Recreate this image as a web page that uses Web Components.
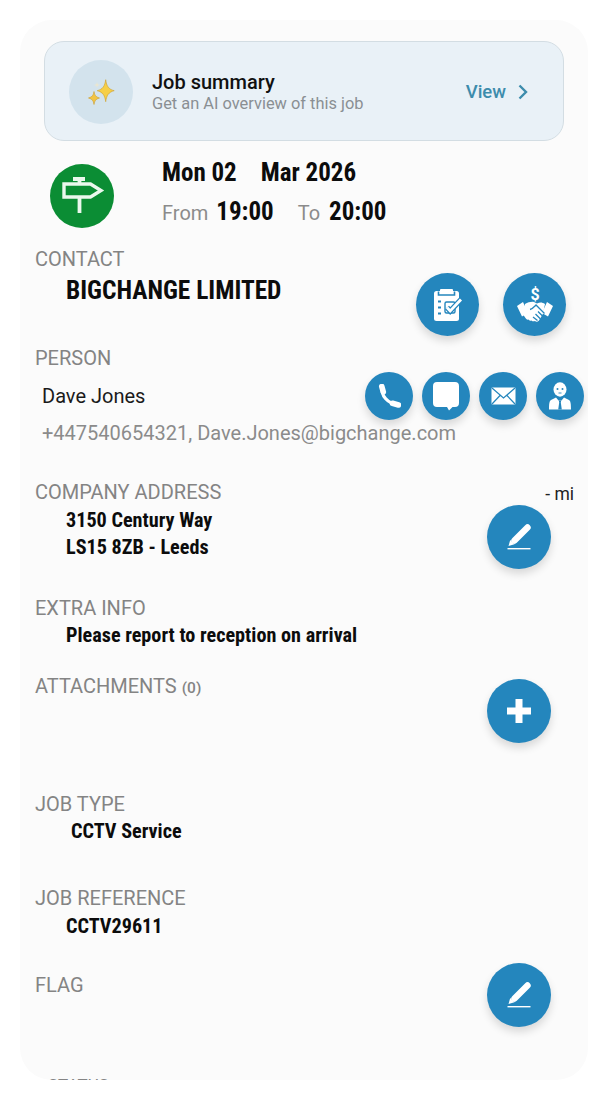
<!DOCTYPE html>
<html><head><meta charset="utf-8">
<style>
html,body{margin:0;background:#fff}
body{font-family:Roboto,"Liberation Sans",sans-serif}
</style></head>
<body>
<template id="t-card"><style>
:host{display:block;margin:20px 20px 0;height:1060px;background:#fbfbfb;border-radius:32px;overflow:hidden;position:relative;box-sizing:border-box;padding:21px 0 0 15px}
</style><slot></slot></template>

<template id="t-banner"><style>
:host{display:flex;align-items:center;box-sizing:border-box;width:520px;height:100px;margin-left:9px;padding:2px 35px 0 24px;background:#e9f1f7;border:1px solid #d3dde3;border-radius:20px}
.c{width:64px;height:64px;border-radius:50%;background:#d3e3ed;display:flex;align-items:center;justify-content:center;margin-right:19px;flex:none}
.t{flex:1;line-height:1}
.a{font-size:20px;font-weight:500;color:#111;display:block;margin-bottom:4px}
.b{font-size:16.400px;color:#8a8f93;display:block}
.v{color:#3d8cac;font-size:18.500px;font-weight:500;display:flex;align-items:center;gap:12px}
</style><span class="c"><slot name="icon"></slot></span><span class="t"><span class="a">Job summary</span><span class="b">Get an AI overview of this job</span></span><span class="v">View <svg width="10" height="16" viewBox="0 0 10 16"><path d="M1.500 1.500 8 8l-6.500 6.500" fill="none" stroke="#3d8cac" stroke-width="2.400"/></svg></span></template>

<template id="t-date"><style>
:host{display:flex;height:64px;margin:23px 0 0 15px}
.i{margin-right:48px;flex:none;width:64px;height:64px}
.d{display:flex;flex-direction:column}
.r{display:flex;align-items:baseline;white-space:nowrap;height:32px}
.r1{margin-top:-10px;height:38px;align-items:center}
b{font-family:"Roboto Condensed",Roboto,sans-serif;font-stretch:condensed;font-size:25px;font-weight:700;color:#0c0c0c}
i{font-style:normal;font-size:20px;color:#8b8b8b}
.r2{margin-top:7px}
</style><span class="i"><slot name="icon"></slot></span><div class="d"><div class="r r1"><b>Mon 02</b><b style="margin-left:24px">Mar 2026</b></div><div class="r r2"><i>From</i><b style="margin-left:8px">19:00</b><i style="margin-left:24px">To</i><b style="margin-left:9px">20:00</b></div></div></template>

<template id="t-section"><style>
:host{display:flow-root;position:relative;height:var(--h,100px)}
.l{font-size:var(--ls,20px);line-height:22px;margin:-1px 0 0;color:#848484;display:block;white-space:nowrap}
.a{position:absolute;top:var(--at,0);right:var(--ar,0);display:flex;gap:var(--gap,0)}
</style><span class="l"><slot name="label"></slot></span><slot></slot><span class="a"><slot name="action"></slot></span></template>

<template id="t-value"><style>
:host{display:block;font-family:"Roboto Condensed",Roboto,sans-serif;font-stretch:condensed;font-weight:700;color:#0c0c0c;font-size:20.200px;line-height:27px;white-space:nowrap;padding-left:var(--in,31px)}
</style><slot></slot></template>

<template id="t-btn"><style>
:host{display:flex;align-items:center;justify-content:center;width:var(--s,64px);height:var(--s,64px);border-radius:50%;background:#2486bd;box-shadow:0 5px 9px rgba(0,0,0,.14);flex:none}
</style><slot></slot></template>

<template id="t-person"><style>
:host{display:block;padding-left:7px}
.n{display:block;height:48px;line-height:48px;margin-top:3px;font-size:20px;color:#1a1a1a}
.s{display:block;line-height:24px;margin-top:1px;font-size:20px;color:#8b8b8b;white-space:nowrap}
</style><span class="n"><slot></slot></span><span class="s"><slot name="sub"></slot></span></template>

<template id="t-mi"><style>
:host{position:absolute;right:14px;top:0;font-size:17.500px;line-height:24px;color:#222}
</style><slot></slot></template>

<template id="t-count"><style>
:host{font-size:15.500px;font-weight:500;color:#848484}
</style><slot></slot></template>

<job-card>
 <job-banner><svg slot="icon" width="28" height="28" viewBox="0 0 28 28"><path d="M18.700 1.700c.9 6.500 3 9.600 8.500 11-5.500 1.400-7.600 4.500-8.500 11-.9-6.500-3-9.600-8.500-11 5.500-1.400 7.600-4.500 8.500-11z" fill="#f6cf48" stroke="#cf9f2c" stroke-width=".6"/><path d="M7 13.500c.5 3.800 1.800 5.400 5.500 6.500-3.700 1.100-5 2.700-5.500 6.500-.5-3.800-1.800-5.400-5.500-6.500 3.700-1.100 5-2.700 5.500-6.500z" fill="#f2c443" stroke="#cf9f2c" stroke-width=".6"/><path d="M10 4l.7 2.300 2.300.7-2.300.7L10 10l-.7-2.300L7 7l2.300-.7z" fill="#ece6cf"/></svg></job-banner>
 <job-date><svg slot="icon" width="64" height="64" viewBox="0 0 64 64"><circle cx="32" cy="32" r="32" fill="#0b8d34"/><path d="M14 20h26.500l10.500 6.500L40.500 33H14z" fill="none" stroke="#eaf8ed" stroke-width="3.400"/><path d="M23 15h12" stroke="#eaf8ed" stroke-width="3.800"/><path d="M29.500 15v5M29.500 33v16" stroke="#eaf8ed" stroke-width="3.800"/></svg></job-date>

 <job-section style="--h:99px;--at:24px;--ar:22px;--gap:24px;--s:63px;margin-top:21px"><span slot="label">CONTACT</span>
  <job-value style="font-size:25.400px;line-height:30px;margin-top:5px">BIGCHANGE LIMITED</job-value>
  <job-btn slot="action"><svg width="30" height="34" viewBox="0 0 30 34"><rect x="1" y="3" width="25" height="30" rx="2.500" fill="#fff"/><path d="M5.500 3.500v3.500h16V3.500" fill="none" stroke="#2486bd" stroke-width="1.600"/><rect x="7" y="1" width="13" height="5" rx="1" fill="#fff"/><path d="M5 13.500h3M5 19.500h3M5 25.500h3" stroke="#2486bd" stroke-width="2.200"/><rect x="12" y="14" width="10" height="11" rx="1.500" fill="none" stroke="#2486bd" stroke-width="1.400"/><path d="M14 19.500l3.200 3.500L28 11.500" fill="none" stroke="#2486bd" stroke-width="5.400"/><path d="M14 19.500l3.200 3.500L28 11.500" fill="none" stroke="#fff" stroke-width="2.800"/></svg></job-btn>
  <job-btn slot="action"><svg width="38" height="38" viewBox="0 0 38 38"><text x="19" y="13.500" text-anchor="middle" font-family="Roboto,sans-serif" font-weight="700" font-size="16" fill="#fff">$</text><path fill="#fff" d="M1 20l6-4 5 11-6 3.500zM37 20l-6-4-5 11 6 3.500z"/><path fill="#fff" d="M9 18c3-1.500 6-2.500 9-2l3 1.500c3-1.500 5-1.500 8 .5l-2 9.500-1 2-3 5c-1.500 1.500-3 1.500-4 .5-1.500 .5-2.500 .5-3.500-.5-1.500 .5-2.500 0-3-1-1.500 .5-2.500-.5-3-1.500L7 28.500z"/><path d="M14 23.500c2.500-.5 4-2.500 6-4.500l8.500 8.500M22 25.500l5 5M19.500 28l5 5M17 31l4.500 3.500" fill="none" stroke="#2486bd" stroke-width="1.300"/></svg></job-btn>
 </job-section>

 <job-section style="--h:134px;--at:24px;--ar:4px;--gap:9px;--s:48px"><span slot="label">PERSON</span>
  <person-lines>Dave Jones<span slot="sub">+447540654321, Dave.Jones@bigchange.com</span></person-lines>
  <job-btn slot="action"><svg width="24" height="24" viewBox="0 0 24 24"><path d="M5.500 3.500C3.500 11 10.500 20 20.500 20" fill="none" stroke="#fff" stroke-width="3.200"/><path d="M4.800 2.500 6.300 8M15.500 19.300l6 1.700" fill="none" stroke="#fff" stroke-width="5.600" stroke-linecap="round"/></svg></job-btn>
  <job-btn slot="action"><svg width="28" height="30" viewBox="0 0 28 30"><path fill="#fff" d="M5 1h18a4 4 0 0 1 4 4v17a4 4 0 0 1-4 4h-2.500L17 29.500 15 26H5a4 4 0 0 1-4-4V5a4 4 0 0 1 4-4z"/></svg></job-btn>
  <job-btn slot="action"><svg width="25" height="18" viewBox="0 0 25 18"><rect x=".5" y=".5" width="24" height="17" rx="1" fill="#fff"/><path d="M1 1l11.500 10L24 1M1 17l8.500-9M24 17l-8.500-9" fill="none" stroke="#2486bd" stroke-width="1.200"/></svg></job-btn>
  <job-btn slot="action"><svg width="24" height="28" viewBox="0 0 24 28"><ellipse cx="12" cy="7.500" rx="6.500" ry="7.200" fill="#fff"/><circle cx="9.500" cy="7" r="1" fill="#2486bd"/><circle cx="14.500" cy="7" r="1" fill="#2486bd"/><path d="M10.500 11h3" stroke="#2486bd" stroke-width=".9"/><path fill="#fff" d="M8 15.500 3 18c-1.500 1-2 3.500-2 9.500h22c0-6-.5-8.500-2-9.500l-5-2.500-2.500 3h-3z"/><path fill="#2486bd" d="M10.800 18.500h2.400l-.4 2 1 7h-3.600l1-7z"/></svg></job-btn>
 </job-section>

 <job-section style="--h:116px;--at:23px;--ar:37px"><span slot="label">COMPANY ADDRESS</span>
  <span-mi>- mi</span-mi>
  <job-value style="margin-top:4px">3150 Century Way</job-value>
  <job-value>LS15 8ZB - Leeds</job-value>
  <job-btn slot="action"><svg width="24" height="26" viewBox="0 0 24 26"><path d="M20.500 3.500 7.500 16.500" stroke="#fff" stroke-width="6.400" stroke-linecap="round"/><path fill="#fff" d="M1.500 22l1.700-6 4.300 4.300z"/><path d="M.5 24.700h23" stroke="#fff" stroke-width="1.400"/></svg></job-btn>
 </job-section>

 <job-section style="--h:78px"><span slot="label">EXTRA INFO</span>
  <job-value style="margin-top:3px">Please report to reception on arrival</job-value>
 </job-section>

 <job-section style="--h:118px;--at:3px;--ar:37px"><span slot="label">ATTACHMENTS <small-count>(0)</small-count></span>
  <job-btn slot="action"><svg width="24" height="24" viewBox="0 0 24 24"><path d="M12 0v24M0 12h24" stroke="#fff" stroke-width="7"/></svg></job-btn>
 </job-section>

 <job-section style="--h:94px"><span slot="label">JOB TYPE</span>
  <job-value style="--in:36px;margin-top:3px">CCTV Service</job-value>
 </job-section>

 <job-section style="--h:87px"><span slot="label">JOB REFERENCE</span>
  <job-value style="margin-top:4px">CCTV29611</job-value>
 </job-section>

 <job-section style="--h:100px;--at:-12px;--ar:37px"><span slot="label">FLAG</span>
  <job-btn slot="action"><svg width="24" height="26" viewBox="0 0 24 26"><path d="M20.500 3.500 7.500 16.500" stroke="#fff" stroke-width="6.400" stroke-linecap="round"/><path fill="#fff" d="M1.500 22l1.700-6 4.300 4.300z"/><path d="M.5 24.700h23" stroke="#fff" stroke-width="1.400"/></svg></job-btn>
 </job-section>

 <job-section style="--h:22px;--ls:17px;margin-left:13px"><span slot="label">STATUS</span></job-section>
</job-card>

<script>
const defs={'job-card':'t-card','job-banner':'t-banner','job-date':'t-date','job-section':'t-section','job-value':'t-value','job-btn':'t-btn','person-lines':'t-person','span-mi':'t-mi','small-count':'t-count'};
for(const [n,t] of Object.entries(defs)){
  customElements.define(n,class extends HTMLElement{
    constructor(){super();this.attachShadow({mode:'open'}).appendChild(document.getElementById(t).content.cloneNode(true));}
  });
}
</script>
</body></html>
